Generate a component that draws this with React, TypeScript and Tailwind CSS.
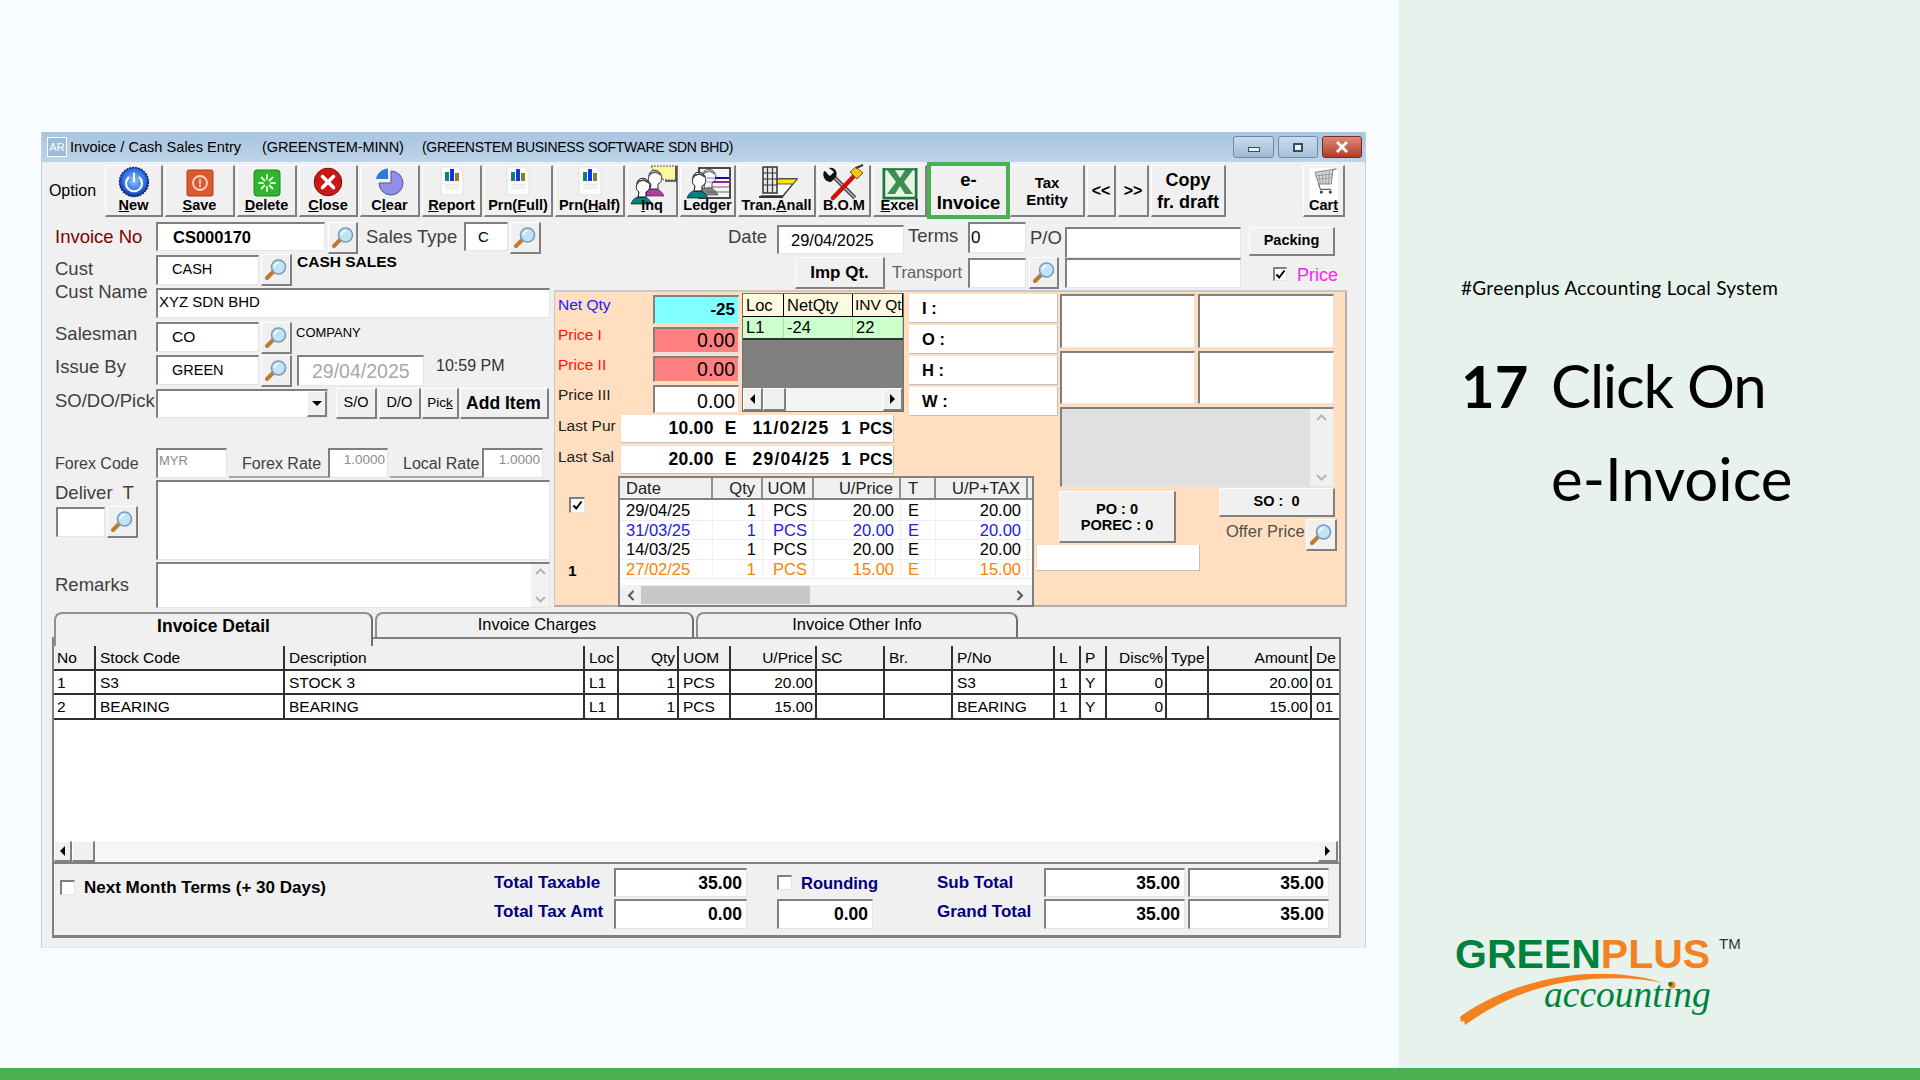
import React from "react";

const Sunk = "bg-white border-t-2 border-l-2 border-t-[#808080] border-l-[#808080] border-r border-b border-r-[#e4e4e4] border-b-[#e4e4e4]";
const Raised = "bg-[#f0f0f0] border-t border-l border-t-white border-l-white border-r-2 border-b-2 border-r-[#808080] border-b-[#808080]";

function Box({ c = "", children }: { c?: string; children?: React.ReactNode }) {
  return <div className={`${Sunk} ${c} shrink-0 flex items-center whitespace-nowrap overflow-hidden`}>{children}</div>;
}
function Btn({ c = "", children }: { c?: string; children?: React.ReactNode }) {
  return <div className={`${Raised} ${c} shrink-0 flex items-center justify-center whitespace-nowrap text-black`}>{children}</div>;
}
function L({ c = "", children }: { c?: string; children?: React.ReactNode }) {
  return <div className={`text-[18.5px] leading-[24px] h-[24px] text-[#404040] whitespace-nowrap shrink-0 ${c}`}>{children}</div>;
}
function Mag({ c = "w-[31px] h-[32px]" }: { c?: string }) {
  return (
    <Btn c={c}>
      <svg width="24" height="24" viewBox="0 0 24 24">
        <path d="M10 13 L3 20" stroke="#c07a30" strokeWidth="4" strokeLinecap="round" />
        <circle cx="14.5" cy="9" r="7" fill="#bfe4f8" stroke="#7a9bb5" strokeWidth="1.6" />
        <path d="M10.5 9a4 4 0 0 1 4-4" stroke="#fff" strokeWidth="1.5" fill="none" />
      </svg>
    </Btn>
  );
}
function Check({ on = false, c = "" }: { on?: boolean; c?: string }) {
  return (
    <div className={`${Sunk} ${c} w-[15px] h-[15px] shrink-0 flex items-center justify-center`}>
      {on && (
        <svg width="11" height="11" viewBox="0 0 11 11">
          <path d="M1.5 5.5 L4.2 8.5 L9.5 1.5" stroke="#000" strokeWidth="2" fill="none" />
        </svg>
      )}
    </div>
  );
}

/* ---- toolbar icons ---- */
const INew = (
  <svg width="32" height="32" viewBox="0 0 32 32">
    <defs>
      <radialGradient id="gnew" cx="50%" cy="45%" r="55%">
        <stop offset="0%" stopColor="#8fc0ff" />
        <stop offset="70%" stopColor="#2f6fe0" />
        <stop offset="100%" stopColor="#0d2f90" />
      </radialGradient>
    </defs>
    <circle cx="16" cy="16" r="14.5" fill="url(#gnew)" stroke="#0a1f60" strokeWidth="1.4" strokeDasharray="2 1" />
    <path d="M10.5 11.5a8 8 0 1 0 11 0" stroke="#fff" strokeWidth="2" fill="none" strokeLinecap="round" />
    <path d="M16 7.5v8" stroke="#fff" strokeWidth="2" strokeLinecap="round" />
  </svg>
);
const ISave = (
  <svg width="28" height="28" viewBox="0 0 28 28">
    <rect x="1" y="1" width="26" height="26" rx="2" fill="#dc5a30" stroke="#b23a15" />
    <circle cx="14" cy="14" r="7" fill="none" stroke="#f7d8c8" strokeWidth="1.8" />
    <path d="M14 9.5v9" stroke="#f7d8c8" strokeWidth="1.6" />
  </svg>
);
const IDelete = (
  <svg width="28" height="28" viewBox="0 0 28 28">
    <rect x="1" y="1" width="26" height="26" rx="3" fill="#2fb52f" stroke="#1c8a1c" />
    <g stroke="#e8ffd8" strokeWidth="1.8" strokeLinecap="round">
      <path d="M14 6v4M14 18v4M6 14h4M18 14h4M8.5 8.5l3 3M19.5 8.5l-3 3M8.5 19.5l3-3M19.5 19.5l-3-3" />
    </g>
  </svg>
);
const IClose = (
  <svg width="30" height="30" viewBox="0 0 30 30">
    <circle cx="15" cy="15" r="13.8" fill="#cc1717" stroke="#7c0a0a" />
    <path d="M9.5 9.5l11 11M20.5 9.5l-11 11" stroke="#fff" strokeWidth="3.6" strokeLinecap="round" />
  </svg>
);
const IClear = (
  <svg width="34" height="30" viewBox="0 0 34 30">
    <path d="M18 5a12 12 0 1 1-12 12h12z" fill="#8f8fe6" stroke="#55559a" />
    <path d="M3 13C4 7 9 3 15 2.5V13z" fill="#2f7ad8" />
  </svg>
);
const IReport = (
  <svg width="28" height="30" viewBox="0 0 28 30">
    <path d="M3 1h17l5 5v23H3z" fill="#fbfbfb" stroke="#e0e0e0" />
    <rect x="7" y="6" width="4" height="9" fill="#0f8080" />
    <rect x="12" y="3" width="4" height="12" fill="#1733e0" />
    <rect x="17" y="7" width="4" height="8" fill="#84841a" />
    <path d="M7 19h14M7 22h14" stroke="#dcdcdc" />
  </svg>
);
const Head = ({ x = 0, y = 0, col = "#008080" }: { x?: number; y?: number; col?: string }) => (
  <g transform={`translate(${x} ${y})`}>
    <path d="M2 32C4 26 9 24 12 25C16 24 20 26 23 32Z" fill={col} stroke="#000" strokeWidth=".6" />
    <path d="M8 12C8 5 18 4 20 11C22 15 20 19 17 20V25H9L10 20C7 18 7 15 8 12Z" fill="#fff" stroke="#111" strokeWidth="1" />
    <path d="M8 12C9 8 12 9 15 8C17 9 19 10 20 11" stroke="#444" strokeWidth="1.6" fill="none" />
  </g>
);
const IInq = (
  <svg width="50" height="38" viewBox="0 0 50 38" className="overflow-visible">
    <path d="M24 0H49V14H40L30 12Z" fill="#fff6a0" stroke="#555" strokeWidth="1" strokeDasharray="2 1" />
    <path d="M49 0V15H38" stroke="#444" strokeWidth="1.6" fill="none" />
    <g opacity=".85"><Head x={14} y={-2} col="#a02090" /></g>
    <Head x={2} y={6} />
  </svg>
);
const ILedger = (
  <svg width="50" height="34" viewBox="0 0 50 34" className="overflow-visible mt-[1px]">
    <rect x="16" y="1" width="31" height="30" fill="#f4f4f4" stroke="#222" strokeWidth="1.6" />
    <path d="M24 11H46" stroke="#1010a0" strokeWidth="2" />
    <path d="M24 15H46" stroke="#a02090" strokeWidth="2" />
    <path d="M24 20H46M24 25H46" stroke="#999" strokeWidth="1.4" />
    <g opacity=".7"><Head x={12} y={-4} col="#555" /></g>
    <Head x={2} y={-1} />
  </svg>
);
const ITran = (
  <svg width="44" height="34" viewBox="0 0 44 34" className="overflow-visible mt-[1px]">
    <path d="M6 29H28L42 12H24L20 20" fill="#fff" stroke="#333" strokeWidth="1.3" />
    <path d="M22 12H42L38 17H21Z" fill="#ffe600" stroke="#333" strokeWidth=".8" />
    <rect x="8" y="0" width="14" height="26" fill="#e8e8e8" stroke="#333" strokeWidth="1.5" />
    <path d="M12.5 0V26M17.5 0V26M8 6H22M8 12H22M8 18H22" stroke="#333" strokeWidth="1.2" />
    <path d="M4 30H28" stroke="#333" strokeWidth="2" />
  </svg>
);
const IBom = (
  <svg width="42" height="36" viewBox="0 0 42 36" className="overflow-visible mt-[2px]">
    <path d="M9 7L32 30" stroke="#444" strokeWidth="4" />
    <path d="M9 7L32 30" stroke="#bbb" strokeWidth="1.5" />
    <path d="M1 3L7 8L11 4L6 0C12-1 15 4 13 9L8 14C4 14-1 9 1 3Z" fill="#111" />
    <path d="M3 4a5 5 0 0 0 4 8" stroke="#111" strokeWidth="3" fill="none" />
    <path d="M31 8L10 30" stroke="#d01010" strokeWidth="4.5" strokeLinecap="round" />
    <path d="M27 4L34 11L40 5L33-1Z" fill="#f2c900" stroke="#333" strokeWidth=".8" />
    <path d="M33 0L40-3" stroke="#333" strokeWidth="2" />
  </svg>
);
const IExcel = (
  <svg width="36" height="32" viewBox="0 0 36 32" className="overflow-visible mt-[2px]">
    <path d="M2 0V30H34V0" fill="none" stroke="#1f7a3a" strokeWidth="3" />
    <rect x="3.5" y="0" width="29" height="28.5" fill="#eaf5ea" />
    <path d="M5 2H13L18 10L23 2H31L22 14L31 26H23L18 18L13 26H5L14 14Z" fill="#3f8f52" />
    <path d="M2 1.2H34" stroke="#1f7a3a" strokeWidth="2" />
  </svg>
);
const ICart = (
  <svg width="32" height="36" viewBox="0 0 32 36">
    <rect x="0" y="0" width="32" height="36" fill="#fff" />
    <path d="M6 5L26 2L24 18H10Z" fill="#d8d8d8" stroke="#777" strokeWidth="1" />
    <path d="M10 7L12 18M14 6L15 18M18 5L18 18M22 4L21 18M7 9L25 7M8 13L24 11" stroke="#888" strokeWidth=".8" />
    <path d="M26 2L30 1M10 18L12 24H24" stroke="#666" strokeWidth="1.2" fill="none" />
    <circle cx="13" cy="27" r="1.8" fill="#444" /><circle cx="23" cy="27" r="1.8" fill="#444" />
  </svg>
);

function TB({ w, icon, pre = "", u = "", post = "" }: { w: string; icon: React.ReactNode; pre?: string; u?: string; post?: string }) {
  return (
    <div className={`${Raised} ${w} h-[52px] shrink-0 flex flex-col items-center overflow-visible`}>
      <div className="h-[31px] w-full flex items-start justify-center">{icon}</div>
      <div className="text-[14.5px] font-bold leading-[16px] text-black whitespace-nowrap">
        {pre}
        {u && <u>{u}</u>}
        {post}
      </div>
    </div>
  );
}

function Toolbar() {
  return (
    <div className="flex items-start gap-[2px] h-[55px] pt-[3px] pr-[20px] shrink-0">
      <div className="w-[61px] h-[52px] flex items-center justify-center text-[16px] text-black">Option</div>
      <TB w="w-[58px]" icon={INew} u="N" post="ew" />
      <TB w="w-[70px]" icon={<div className="mt-[3px]">{ISave}</div>} u="S" post="ave" />
      <TB w="w-[60px]" icon={<div className="mt-[3px]">{IDelete}</div>} u="D" post="elete" />
      <TB w="w-[59px]" icon={<div className="mt-[1px]">{IClose}</div>} u="C" post="lose" />
      <TB w="w-[60px]" icon={IClear} pre="C" u="l" post="ear" />
      <TB w="w-[60px]" icon={IReport} u="R" post="eport" />
      <TB w="w-[69px]" icon={IReport} pre="Prn(" u="F" post="ull)" />
      <TB w="w-[70px]" icon={IReport} pre="Prn(" u="H" post="alf)" />
      <TB w="w-[51px]" icon={IInq} u="I" post="nq" />
      <TB w="w-[56px]" icon={ILedger} pre="Ledger" />
      <TB w="w-[78px]" icon={ITran} pre="Tran." u="A" post="nall" />
      <TB w="w-[53px]" icon={IBom} pre="B.O.M" />
      <TB w="w-[54px]" icon={IExcel} u="E" post="xcel" />
      <div className="w-[83px] h-[57px] -mt-[3px] -mx-[2px] shrink-0 border-[4px] border-[#4caf50] bg-[#f0f0f0] flex flex-col items-center justify-center text-[18.5px] font-bold leading-[23px] text-black z-10">
        <span>e-</span>
        <span>Invoice</span>
      </div>
      <Btn c="w-[75px] h-[52px] flex-col text-[15px] font-bold leading-[17px]">
        <span>Tax</span>
        <span>Entity</span>
      </Btn>
      <Btn c="w-[29px] h-[52px] text-[16px] font-bold">&lt;&lt;</Btn>
      <Btn c="w-[31px] h-[52px] text-[16px] font-bold">&gt;&gt;</Btn>
      <Btn c="w-[75px] h-[52px] flex-col text-[18px] font-bold leading-[22px]">
        <span>Copy</span>
        <span>fr. draft</span>
      </Btn>
      <div className="flex-1" />
      <TB w="w-[42px]" icon={<div className="scale-90">{ICart}</div>} pre="Car" u="t" />
    </div>
  );
}

function WinBtn({ c, children }: { c: string; children: React.ReactNode }) {
  return <div className={`${c} h-[22px] rounded-[3px] border border-[#6f8aa6] flex items-center justify-center`}>{children}</div>;
}

function TitleBar() {
  return (
    <div className="h-[30px] shrink-0 bg-gradient-to-b from-[#a8c4df] to-[#bdd3e8] flex items-center pl-[5px] pr-[3px]">
      <div className="w-[20px] h-[20px] border border-white bg-[#9dbcd9] text-white text-[11px] leading-[18px] text-center shrink-0">AR</div>
      <span className="ml-[3px] pt-[1px] w-[192px] shrink-0 text-[14.6px] text-black whitespace-nowrap">Invoice / Cash Sales Entry</span>
      <span className="w-[160px] pt-[1px] shrink-0 text-[14.5px] tracking-[-0.1px] text-black whitespace-nowrap">(GREENSTEM-MINN)</span>
      <span className="pt-[1px] text-[14px] tracking-[-0.3px] text-black whitespace-nowrap">(GREENSTEM BUSINESS SOFTWARE SDN BHD)</span>
      <div className="flex-1" />
      <div className="flex gap-[4px]">
        <WinBtn c="w-[41px] bg-gradient-to-b from-[#c9dcee] to-[#9fb9d3]"><div className="w-[12px] h-[5px] bg-[#e8f0f8] border border-[#3b4a5a] mt-[5px]" /></WinBtn>
        <WinBtn c="w-[40px] bg-gradient-to-b from-[#c9dcee] to-[#a9c2da]"><div className="w-[10px] h-[9px] bg-[#e8f0f8] border-2 border-[#3b4a5a]" /></WinBtn>
        <WinBtn c="w-[40px] bg-gradient-to-b from-[#dd8a78] to-[#b23a25] border-[#7a2a1c]">
          <svg width="14" height="12" viewBox="0 0 14 12"><path d="M2 1l10 10M12 1L2 11" stroke="#fff" strokeWidth="2.8" /></svg>
        </WinBtn>
      </div>
    </div>
  );
}

function LeftForm() {
  return (
    <div className="w-[502px] shrink-0 pl-[3px] pt-[2px] flex flex-col">
      <div className="flex items-start h-[33px]">
        <L c="w-[101px] mt-[3px] !text-[#800000]">Invoice No</L>
        <Box c="w-[169px] h-[29px] pl-[15px] text-[16.5px] font-bold text-black">CS000170</Box>
        <div className="ml-[3px]"><Mag c="w-[30px] h-[32px]" /></div>
        <L c="ml-[8px] w-[98px] mt-[3px]">Sales Type</L>
        <Box c="w-[44px] h-[29px] pl-[12px] text-[15px] text-black">C</Box>
        <div className="ml-[2px]"><Mag /></div>
      </div>
      <div className="flex items-start h-[33px]">
        <L c="w-[101px] mt-[2px]">Cust</L>
        <Box c="w-[103px] h-[30px] pl-[14px] pb-[1px] text-[14.5px] text-black">CASH</Box>
        <div className="ml-[2px] -mt-[1px]"><Mag /></div>
        <div className="ml-[5px] -mt-[1px] text-[15.5px] font-bold leading-[16px] text-black whitespace-nowrap">CASH SALES</div>
      </div>
      <div className="flex items-start h-[34px]">
        <L c="w-[101px] -mt-[8px]">Cust Name</L>
        <Box c="w-[394px] h-[30px] pl-[1px] pb-[2px] text-[15px] text-black">XYZ SDN BHD</Box>
      </div>
      <div className="flex items-start h-[33px]">
        <L c="w-[101px]">Salesman</L>
        <Box c="w-[103px] h-[30px] pl-[14px] pb-[1px] text-[15.5px] text-black">CO</Box>
        <div className="ml-[2px]"><Mag /></div>
        <div className="ml-[4px] mt-[3px] text-[13px] leading-[16px] text-black whitespace-nowrap">COMPANY</div>
      </div>
      <div className="flex items-start h-[34px]">
        <L c="w-[101px]">Issue By</L>
        <Box c="w-[103px] h-[30px] pl-[14px] text-[14.5px] text-black">GREEN</Box>
        <div className="ml-[2px]"><Mag /></div>
        <Box c="ml-[5px] w-[127px] h-[31px] pl-[13px] pt-[2px] text-[19.5px] text-[#a8a8a8]">29/04/2025</Box>
        <div className="ml-[12px] mt-[2px] text-[16px] leading-[18px] text-[#333] whitespace-nowrap">10:59 PM</div>
      </div>
      <div className="flex items-start h-[59px]">
        <L c="w-[101px]">SO/DO/Pick</L>
        <Box c="w-[172px] h-[29px] justify-end">
          <div className={`${Raised} w-[20px] h-full flex items-center justify-center`}>
            <div className="w-0 h-0 border-l-[5px] border-r-[5px] border-t-[5px] border-l-transparent border-r-transparent border-t-black" />
          </div>
        </Box>
        <Btn c="ml-[8px] w-[41px] h-[31px] -mt-[1px] text-[14.5px]">S/O</Btn>
        <Btn c="ml-[2px] w-[42px] h-[31px] -mt-[1px] text-[14.5px]">D/O</Btn>
        <Btn c="ml-[1px] w-[37px] h-[31px] -mt-[1px] text-[13.5px]"><span>Pic<u>k</u></span></Btn>
        <Btn c="ml-[1px] w-[89px] h-[31px] -mt-[1px] pt-[1px] pr-[1px] text-[17.5px] font-bold">Add Item</Btn>
      </div>
      <div className="flex items-start h-[32px]">
        <L c="w-[101px] mt-[4px] !text-[16px] text-[#404040]">Forex Code</L>
        <Box c="w-[71px] h-[30px] pl-[1px] pb-[6px] text-[13px] text-[#8c8c8c]">MYR</Box>
        <div className="ml-[2px] w-[99px] h-[30px] border-b-2 border-b-[#a8a8a8] pl-[13px] pt-[1px] text-[16px] leading-[30px] text-[#404040] whitespace-nowrap">Forex Rate</div>
        <Box c="w-[60px] h-[30px] justify-end pr-[2px] pb-[6px] text-[13.5px] text-[#8c8c8c]">1.0000</Box>
        <div className="ml-[2px] w-[92px] h-[30px] border-b-2 border-b-[#a8a8a8] pl-[13px] pt-[1px] text-[16px] leading-[30px] text-[#404040] whitespace-nowrap">Local Rate</div>
        <Box c="w-[61px] h-[30px] justify-end pr-[2px] pb-[6px] text-[13.5px] text-[#8c8c8c]">1.0000</Box>
      </div>
      <div className="flex items-start h-[82px]">
        <div className="w-[101px] shrink-0">
          <L c="mt-[1px] mb-[2px]">Deliver&nbsp; T</L>
          <div className="flex items-start ml-[1px]">
            <Box c="w-[49px] h-[30px]" />
            <div className="ml-[2px] -mt-[1px]"><Mag /></div>
          </div>
        </div>
        <Box c="w-[394px] h-[80px]" />
      </div>
      <div className="flex items-start h-[46px]">
        <L c="w-[101px] mt-[11px]">Remarks</L>
        <Box c="w-[394px] h-[46px] justify-end">
          <div className="w-[18px] h-full bg-[#f2f2f2] flex flex-col items-center justify-between py-[4px]">
            <Chev up /><Chev />
          </div>
        </Box>
      </div>
    </div>
  );
}

function Chev({ up = false, c = "#b4b4b4" }: { up?: boolean; c?: string }) {
  return (
    <svg width="11" height="7" viewBox="0 0 11 7">
      <path d={up ? "M1 6L5.5 1.5L10 6" : "M1 1L5.5 5.5L10 1"} stroke={c} strokeWidth="2" fill="none" />
    </svg>
  );
}

function ArrowBtn({ left = false, c = "w-[20px] h-full" }: { left?: boolean; c?: string }) {
  return (
    <div className={`${Raised} ${c} shrink-0 flex items-center justify-center`}>
      <div className={left ? "w-0 h-0 border-y-[5px] border-r-[5px] border-y-transparent border-r-black" : "w-0 h-0 border-y-[5px] border-l-[5px] border-y-transparent border-l-black"} />
    </div>
  );
}

function PriceCol() {
  const rows = [
    { t: "Net Qty", tc: "text-[#2020ff]", v: "-25", h: "h-[29px]", bg: "!bg-[#80ffff]", vc: "font-bold text-[17px]", lc: "" },
    { t: "Price I", tc: "text-[#ff1010]", v: "0.00", h: "h-[26px]", bg: "!bg-[#ff8080]", vc: "text-[19.5px] pt-[1px]", lc: "-mt-[2px]" },
    { t: "Price II", tc: "text-[#ff1010]", v: "0.00", h: "h-[26px]", bg: "!bg-[#ff8080]", vc: "text-[19.5px]", lc: "-mt-[1px]" },
    { t: "Price III", tc: "text-[#222]", v: "0.00", h: "h-[28px]", bg: "", vc: "text-[19.5px] pt-[4px]", lc: "" },
  ];
  return (
    <div className="w-[187px] shrink-0 pt-[2px] pl-[3px] flex flex-col gap-[3px]">
      {rows.map((r) => (
        <div key={r.t} className={`flex items-start ${r.h}`}>
          <div className={`w-[95px] shrink-0 text-[15.5px] leading-[20px] whitespace-nowrap ${r.tc} ${r.lc}`}>{r.t}</div>
          <Box c={`w-[86px] ${r.h} justify-end pr-[3px] text-black ${r.bg} ${r.vc}`}>{r.v}</Box>
        </div>
      ))}
    </div>
  );
}

function MiniGrid() {
  const cols = ["w-[41px]", "w-[69px]", "w-[50px]"];
  const head = ["Loc", "NetQty", "INV Qt"];
  const row = ["L1", "-24", "22"];
  return (
    <div className="w-[162px] h-[119px] shrink-0 bg-[#808080] border border-[#707070] flex flex-col text-[16.5px] text-black">
      <div className="flex h-[23px] shrink-0 bg-[#fff9e0] border-b border-black">
        {head.map((h, i) => (
          <div key={h} className={`${cols[i]} border-r border-black leading-[22px] overflow-hidden whitespace-nowrap ${i === 2 ? "pl-[2px] text-[15.5px]" : "pl-[3px]"}`}>{h}</div>
        ))}
      </div>
      <div className="flex h-[23px] shrink-0 bg-[#ccffcc] border-b-2 border-[#333]">
        {row.map((h, i) => (
          <div key={i} className={`${cols[i]} border-r border-[#b0d8b0] pl-[3px] leading-[20px]`}>{h}</div>
        ))}
      </div>
      <div className="flex-1" />
      <div className="h-[23px] shrink-0 flex bg-[#f4f4f4]">
        <ArrowBtn left />
        <div className={`${Raised} w-[23px] h-full`} />
        <div className="flex-1" />
        <ArrowBtn />
      </div>
    </div>
  );
}

function IOHW() {
  const rows = ["I :", "O :", "H :", "W :"];
  return (
    <div className="ml-[5px] w-[149px] shrink-0 pt-[1px] flex flex-col gap-[2px]">
      {rows.map((t) => (
        <div key={t} className="h-[29px] bg-white border-r border-b border-[#c0c0c0] pl-[13px] text-[16.5px] font-bold leading-[28px] text-black">{t}</div>
      ))}
    </div>
  );
}

function DateGrid() {
  const w = ["w-[93px]", "w-[50px]", "w-[51px]", "w-[87px]", "w-[35px]", "w-[92px]"];
  const al = ["text-left pl-[6px]", "text-right pr-[6px]", "text-right pr-[6px]", "text-right pr-[6px]", "text-left pl-[7px]", "text-right pr-[6px]"];
  const head = ["Date", "Qty", "UOM", "U/Price", "T", "U/P+TAX"];
  const rows = [
    { c: "text-black", v: ["29/04/25", "1", "PCS", "20.00", "E", "20.00"] },
    { c: "text-[#2020e0]", v: ["31/03/25", "1", "PCS", "20.00", "E", "20.00"] },
    { c: "text-black", v: ["14/03/25", "1", "PCS", "20.00", "E", "20.00"] },
    { c: "text-[#ff8000]", v: ["27/02/25", "1", "PCS", "15.00", "E", "15.00"] },
  ];
  return (
    <div className="w-[416px] h-[131px] shrink-0 border-2 border-[#808080] bg-white flex flex-col text-[16.5px]">
      <div className="flex h-[22px] shrink-0 bg-[#f0f0f0] border-b-2 border-[#808080] text-[#222]">
        {head.map((h, i) => (
          <div key={h} className={`${w[i]} ${al[i]} border-r-2 border-[#909090] leading-[20px] whitespace-nowrap`}>{h}</div>
        ))}
      </div>
      <div className="h-[85px] shrink-0 pt-[1px]">
        {rows.map((r) => (
          <div key={r.v[0]} className={`flex h-[19.5px] border-b border-[#efefef] ${r.c}`}>
            {r.v.map((x, i) => (
              <div key={i} className={`${w[i]} ${al[i]} border-r border-[#efefef] leading-[19px] whitespace-nowrap`}>{x}</div>
            ))}
          </div>
        ))}
      </div>
      <div className="flex-1 bg-[#f0f0f0] flex items-center justify-between">
        <div className="w-[21px] flex justify-center"><svg width="8" height="11" viewBox="0 0 8 11"><path d="M6.5 1L2 5.5L6.5 10" stroke="#555" strokeWidth="2" fill="none" /></svg></div>
        <div className="w-[169px] h-[18px] bg-[#c8c8c8]" />
        <div className="flex-1" />
        <div className="w-[24px] flex justify-center"><svg width="8" height="11" viewBox="0 0 8 11"><path d="M1.5 1L6 5.5L1.5 10" stroke="#555" strokeWidth="2" fill="none" /></svg></div>
      </div>
    </div>
  );
}

function Peach() {
  return (
    <div className="w-[793px] h-[317px] bg-[#ffdfbf] border-t-2 border-t-[#c8c8c8] border-r-2 border-b-2 border-r-[#b0b0b0] border-b-[#b0b0b0] border-l border-l-[#c8c8c8] flex">
      <div className="w-[502px] shrink-0 flex flex-col pt-[1px]">
        <div className="flex items-start h-[122px] shrink-0">
          <PriceCol />
          <MiniGrid />
          <IOHW />
        </div>
        {[
          { t: "Last Pur", v: "10.00", d: "11/02/25" },
          { t: "Last Sal", v: "20.00", d: "29/04/25" },
        ].map((r, i) => (
          <div key={r.t} className={`flex items-start h-[28px] shrink-0 ${i ? "mt-[3px]" : ""}`}>
            <div className="w-[66px] pl-[3px] shrink-0 text-[15.5px] leading-[22px] text-[#222]">{r.t}</div>
            <div className="w-[273px] h-[28px] bg-white border-r border-b border-[#c0c0c0] flex items-center text-[17.5px] font-bold tracking-[0.3px] text-black whitespace-nowrap">
              <span className="w-[93px] text-right">{r.v}</span>
              <span className="ml-[11px] w-[28px]">E</span>
              <span className="w-[89px] tracking-[1.2px]">{r.d}</span>
              <span className="w-[18px]">1</span>
              <span className="text-[16px]">PCS</span>
            </div>
          </div>
        ))}
        <div className="flex items-start mt-[2px]">
          <div className="w-[63px] h-[131px] shrink-0 pl-[14px] pt-[21px] flex flex-col">
            <Check on c="!w-[16px] !h-[16px]" />
            <div className="-ml-[1px] mt-[46px] text-[15.5px] font-bold text-black">1</div>
          </div>
          <DateGrid />
        </div>
      </div>
      <div className="ml-[3px] w-[286px] shrink-0 pt-[2px] flex flex-col">
        <div className="grid grid-cols-[135px_136px] gap-x-[3px] gap-y-[3px]">
          <Box c="h-[54px]" /><Box c="h-[54px]" />
          <Box c="h-[53px]" /><Box c="h-[53px]" />
        </div>
        <div className={`${Sunk} !bg-[#e0e0e0] mt-[3px] w-[274px] h-[80px] flex justify-end`}>
          <div className="w-[23px] h-full bg-[#f0f0f0] flex flex-col items-center justify-between py-[5px]">
            <Chev up /><Chev />
          </div>
        </div>
        <div className="flex items-start h-[55px] mt-[1px]">
          <Btn c="w-[117px] h-[52px] mt-[3px] -ml-[1px] flex-col text-[14.5px] font-bold leading-[16px]">
            <span>PO : 0</span>
            <span>POREC : 0</span>
          </Btn>
          <div className="ml-[43px] w-[120px] shrink-0 flex flex-col">
            <Btn c="w-[116px] h-[29px] text-[14.5px] font-bold whitespace-pre">SO :  0</Btn>
            <div className="flex items-start mt-[2px]">
              <div className="ml-[7px] w-[80px] shrink-0 text-[16.5px] leading-[24px] text-[#505050] whitespace-nowrap">Offer Price</div>
              <Mag c="w-[31px] h-[32px]" />
            </div>
          </div>
        </div>
        <div className="-ml-[23px] mt-[2px] w-[163px] h-[26px] bg-white border-r border-b border-[#c0c0c0]" />
      </div>
    </div>
  );
}

function RightForm() {
  return (
    <div className="flex-1 flex flex-col pt-[2px]">
      <div className="flex items-start h-[35px] shrink-0">
        <L c="ml-[174px] w-[49px] mt-[3px]">Date</L>
        <Box c="mt-[3px] w-[127px] h-[29px] pl-[12px] text-[16.5px] text-black">29/04/2025</Box>
        <L c="ml-[4px] w-[60px] mt-[2px]">Terms</L>
        <Box c="w-[58px] h-[31px] pl-[1px] text-[17px] text-black">0</Box>
        <L c="ml-[4px] w-[35px] mt-[4px]">P/O</L>
        <Box c="mt-[5px] w-[176px] h-[31px]" />
        <Btn c="ml-[8px] mt-[5px] w-[86px] h-[29px] text-[14.5px] font-bold">Packing</Btn>
      </div>
      <div className="flex items-start h-[33px] shrink-0">
        <Btn c="ml-[241px] w-[90px] h-[32px] text-[17px] font-bold">Imp Qt.</Btn>
        <div className="ml-[7px] w-[76px] shrink-0 mt-[5px] text-[16.5px] leading-[20px] text-[#606060]">Transport</div>
        <Box c="mt-[1px] w-[58px] h-[30px]" />
        <div className="ml-[3px]"><Mag c="w-[30px] h-[32px]" /></div>
        <Box c="ml-[6px] mt-[1px] w-[176px] h-[30px]" />
        <Check on c="ml-[32px] mt-[10px] !w-[14px] !h-[14px]" />
        <div className="ml-[10px] mt-[7px] text-[18px] leading-[22px] text-[#ff20ff]">Price</div>
      </div>
      <Peach />
    </div>
  );
}

const COLS = "grid-cols-[42px_189px_300px_34px_60px_52px_86px_68px_68px_102px_26px_26px_60px_42px_103px_27px]";

function TableRow({ cells, head = false }: { cells: string[]; head?: boolean }) {
  const right = [4, 6, 12, 14];
  return (
    <div className={`grid ${COLS} h-[24.5px] shrink-0 border-b-2 border-[#303030] ${head ? "bg-[#f0f0f0]" : "bg-white"} text-[15.5px] text-black`}>
      {cells.map((c, i) => (
        <div key={i} className={`border-r-2 border-[#303030] last:border-r-0 leading-[24px] overflow-hidden whitespace-nowrap ${right.includes(i) ? "text-right pr-[2px]" : i === 0 ? "text-left pl-[3px]" : "text-left pl-[4px]"}`}>
          {c}
        </div>
      ))}
    </div>
  );
}

function InvoiceGrid() {
  return (
    <div className="flex flex-col">
      <div className="flex items-start h-[25px] pl-[2px] shrink-0 text-[16.4px] text-black">
        <div className="w-[319px] h-[34px] z-10 bg-[#f0f0f0] rounded-t-[8px] border-2 border-b-0 border-[#909090] border-r-[#707070] text-center font-bold text-[17.5px] leading-[25px]">Invoice Detail</div>
        <div className="ml-[2px] w-[319px] h-[25px] pl-[5px] bg-[#f0f0f0] rounded-t-[8px] border-2 border-b-0 border-[#909090] border-r-[#707070] text-center leading-[21px]">Invoice Charges</div>
        <div className="ml-[2px] w-[322px] h-[25px] bg-[#f0f0f0] rounded-t-[8px] border-2 border-b-0 border-[#909090] border-r-[#707070] text-center leading-[21px]">Invoice Other Info</div>
      </div>
      <div className="w-[1289px] h-[301px] border-2 border-[#808080] border-b-[3px] flex flex-col bg-[#f0f0f0]">
        <div className="h-[7px] shrink-0" />
        <TableRow head cells={["No", "Stock Code", "Description", "Loc", "Qty", "UOM", "U/Price", "SC", "Br.", "P/No", "L", "P", "Disc%", "Type", "Amount", "De"]} />
        <TableRow cells={["1", "S3", "STOCK 3", "L1", "1", "PCS", "20.00", "", "", "S3", "1", "Y", "0", "", "20.00", "01"]} />
        <TableRow cells={["2", "BEARING", "BEARING", "L1", "1", "PCS", "15.00", "", "", "BEARING", "1", "Y", "0", "", "15.00", "01"]} />
        <div className="flex-1 bg-white min-h-0" />
        <div className="h-[21px] shrink-0 bg-[#f6f6f6] flex items-center">
          <ArrowBtn left c="w-[18px] h-full" />
          <div className={`${Raised} w-[23px] h-full`} />
          <div className="flex-1" />
          <ArrowBtn c="w-[20px] h-full mr-[1px]" />
        </div>
        <div className="h-[73px] shrink-0 border-t-2 border-[#808080] flex items-start pt-[4px] text-[17px] font-bold">
          <div className="w-[440px] shrink-0 flex items-center pl-[6px] pt-[7px] text-[17px] text-black">
            <Check />
            <span className="ml-[9px] whitespace-nowrap">Next Month Terms (+ 30 Days)</span>
          </div>
          <div className="w-[120px] shrink-0 text-[#000080] leading-[20px] pt-[5px] whitespace-nowrap">
            <div>Total Taxable</div>
            <div className="mt-[9px]">Total Tax Amt</div>
          </div>
          <div className="w-[133px] shrink-0 flex flex-col gap-[2px] text-[17.5px] text-black">
            <Box c="h-[29px] justify-end pr-[4px]">35.00</Box>
            <Box c="h-[30px] justify-end pr-[4px]">0.00</Box>
          </div>
          <div className="ml-[30px] w-[160px] shrink-0">
            <div className="h-[29px] flex items-center text-[16.5px] text-[#000080] leading-[20px]">
              <Check />
              <span className="ml-[9px]">Rounding</span>
            </div>
            <Box c="mt-[2px] w-[96px] h-[30px] justify-end pr-[4px] text-[17.5px] text-black">0.00</Box>
          </div>
          <div className="w-[107px] shrink-0 text-[#000080] leading-[20px] pt-[5px] whitespace-nowrap">
            <div>Sub Total</div>
            <div className="mt-[9px]">Grand Total</div>
          </div>
          {[0, 1].map((k) => (
            <div key={k} className={`w-[141px] shrink-0 flex flex-col gap-[2px] text-[17.5px] text-black ${k ? "ml-[3px]" : ""}`}>
              <Box c="h-[29px] justify-end pr-[4px]">35.00</Box>
              <Box c="h-[30px] justify-end pr-[4px]">35.00</Box>
            </div>
          ))}
        </div>
      </div>
    </div>
  );
}

function Win() {
  return (
    <div className="w-[1325px] h-[816px] bg-[#f0f0f0] border-x border-b border-x-[#bcd3ea] border-b-[#dfe6ee] flex flex-col font-['Liberation_Sans',Arial,sans-serif]">
      <TitleBar />
      <Toolbar />
      <div className="pl-[10px] pt-[3px] flex flex-col flex-1 min-h-0">
        <div className="flex h-[390px] shrink-0">
          <LeftForm />
          <RightForm />
        </div>
        <div className="mt-[2px]"><InvoiceGrid /></div>
      </div>
    </div>
  );
}

function Logo() {
  return (
    <div className="relative w-[300px] h-[100px] font-['Liberation_Sans',Arial,sans-serif]">
      <div className="absolute left-0 top-0 text-[41px] font-bold leading-[46px] tracking-[0px] whitespace-nowrap">
        <span className="text-[#00823c]">GREEN</span>
        <span className="text-[#f58220]">PLUS</span>
      </div>
      <div className="absolute left-[264px] top-[5px] text-[15px] leading-[16px] text-[#333]">TM</div>
      <svg className="absolute left-0 top-0" width="300" height="100" viewBox="0 0 300 100">
        <path d="M5 86C20 74 60 52 112 45C140 41 180 42 208 52C185 47 150 45 112 51C75 57 40 72 10 94L9 90L6 91Z" fill="#f58220" />
        <circle cx="217" cy="54" r="3.4" fill="#f58220" />
      </svg>
      <div className="absolute left-[89px] top-[44px] font-['Liberation_Serif',serif] italic text-[37.5px] leading-[40px] text-[#00823c] whitespace-nowrap">accounting</div>
    </div>
  );
}

export default function App() {
  return (
    <div className="w-[1920px] h-[1080px] flex flex-col overflow-hidden">
      <div className="flex h-[1068px] shrink-0">
        <div className="w-[1399px] shrink-0 bg-[#f8fbff] pt-[132px] pl-[41px]">
          <Win />
        </div>
        <div className="flex-1 bg-[#e8f2ec] flex flex-col pl-[62px] pt-[276px] pb-[37px] text-black">
          <div className="font-['Lato',sans-serif] text-[19px] leading-[24px] tracking-[0.3px] whitespace-nowrap">#Greenplus Accounting Local System</div>
          <div className="flex mt-[39px] font-['Lato',sans-serif] text-[60px] leading-[93px]">
            <div className="w-[90px] shrink-0 font-bold text-[58px]">17</div>
            <div>
              <div className="tracking-[-1.2px]">Click On</div>
              <div>e-Invoice</div>
            </div>
          </div>
          <div className="mt-auto -ml-[6px]"><Logo /></div>
        </div>
      </div>
      <div className="h-[12px] shrink-0 bg-[#4caf50]" />
    </div>
  );
}
